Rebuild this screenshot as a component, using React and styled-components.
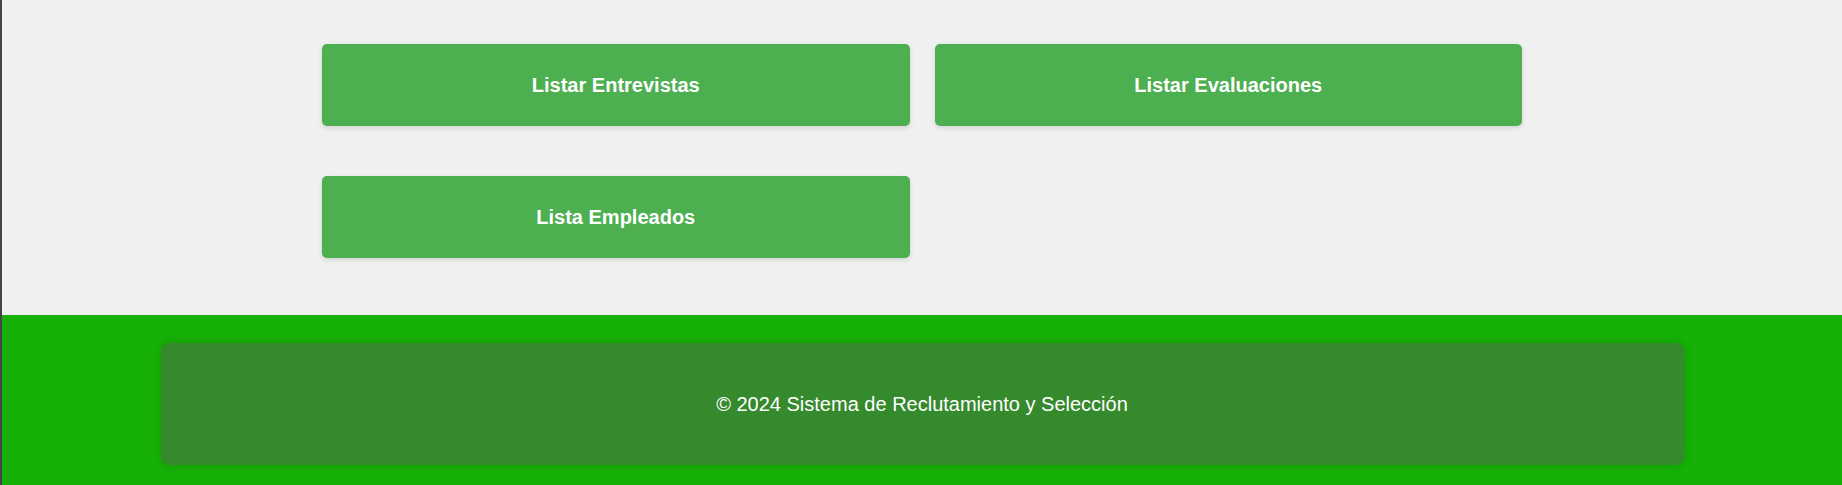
import React from "react";
import styled, { createGlobalStyle } from "styled-components";

const GlobalStyle = createGlobalStyle`
  html, body {
    margin: 0;
    padding: 0;
    background: #f0f0f0;
    font-family: "Liberation Sans", Arial, sans-serif;
  }
  * { box-sizing: border-box; }
`;

const Page = styled.div`
  min-height: 485px;
  border-left: 2px solid #444;
  display: flex;
  flex-direction: column;
`;

const Main = styled.main`
  padding: 44px 0 57px;
`;

const Grid = styled.div`
  max-width: 1200px;
  margin: 0 auto;
  display: grid;
  grid-template-columns: 1fr 1fr;
  column-gap: 25px;
  row-gap: 50px;
`;

const ActionButton = styled.button`
  height: 82px;
  border: none;
  border-radius: 5px;
  background: #4caf50;
  color: #fff;
  font-family: "Liberation Sans", Arial, sans-serif;
  font-size: 20px;
  font-weight: 700;
  box-shadow: 0 2px 5px rgba(0, 0, 0, 0.12);
  cursor: pointer;
`;

const Footer = styled.footer`
  background: #16b006;
  padding: 28px 0 20px;
`;

const FooterBox = styled.div`
  max-width: 1523px;
  height: 122px;
  margin: 0 auto;
  background: #358a2d;
  border-radius: 8px;
  box-shadow: 0 0 8px rgba(0, 0, 0, 0.12);
  display: flex;
  align-items: center;
  justify-content: center;
  color: #fff;
  font-size: 20px;
`;

export default function App() {
  const items = ["Listar Entrevistas", "Listar Evaluaciones", "Lista Empleados"];
  return (
    <>
      <GlobalStyle />
      <Page>
        <Main>
          <Grid>
            {items.map((t) => (
              <ActionButton key={t}>{t}</ActionButton>
            ))}
          </Grid>
        </Main>
        <Footer>
          <FooterBox>© 2024 Sistema de Reclutamiento y Selección</FooterBox>
        </Footer>
      </Page>
    </>
  );
}
